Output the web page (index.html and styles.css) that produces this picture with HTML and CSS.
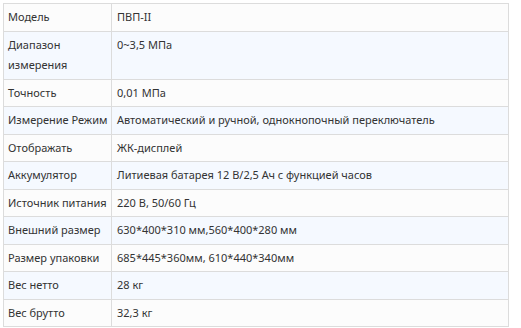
FILE: index.html
```html
<!DOCTYPE html>
<html lang="ru">
<head>
<meta charset="utf-8">
<link rel="stylesheet" href="styles.css">
</head>
<body>
<table class="spec">
  <tbody>
    <tr><td class="k">Модель</td><td class="v">ПВП-II</td></tr>
    <tr><td class="k">Диапазон<br>измерения</td><td class="v">0~3,5 МПа</td></tr>
    <tr><td class="k">Точность</td><td class="v">0,01 МПа</td></tr>
    <tr><td class="k">Измерение Режим</td><td class="v">Автоматический и ручной, однокнопочный переключатель</td></tr>
    <tr><td class="k">Отображать</td><td class="v">ЖК-дисплей</td></tr>
    <tr><td class="k">Аккумулятор</td><td class="v">Литиевая батарея 12 В/2,5 Ач с функцией часов</td></tr>
    <tr><td class="k">Источник питания</td><td class="v">220 В, 50/60 Гц</td></tr>
    <tr><td class="k">Внешний размер</td><td class="v">630*400*310 мм,560*400*280 мм</td></tr>
    <tr><td class="k">Размер упаковки</td><td class="v">685*445*360мм, 610*440*340мм</td></tr>
    <tr><td class="k">Вес нетто</td><td class="v">28 кг</td></tr>
    <tr><td class="k">Вес брутто</td><td class="v">32,3 кг</td></tr>
  </tbody>
</table>
</body>
</html>
```
FILE: styles.css
```css
html, body {
  margin: 0;
  padding: 0;
  background: #ffffff;
}
body {
  padding: 3px 0 0 3px;
  font-family: "Noto Sans", "Open Sans", sans-serif;
  font-size: 11px;
  color: #333333;
}
.spec {
  border-collapse: collapse;
  width: 506px;
  table-layout: fixed;
}
.spec td {
  border: 1px solid #dcdcdc;
  padding: 3px 4px;
  line-height: 20.5px;
  vertical-align: top;
}
.spec td.k {
  width: 101px;
  padding-right: 2px;
  white-space: nowrap;
}
.spec td.v {
  padding-left: 5px;
}
.spec tr:nth-child(odd) {
  background: #fcfcfc;
}
.spec tr:nth-child(even) {
  background: #f5f9ff;
}
```
